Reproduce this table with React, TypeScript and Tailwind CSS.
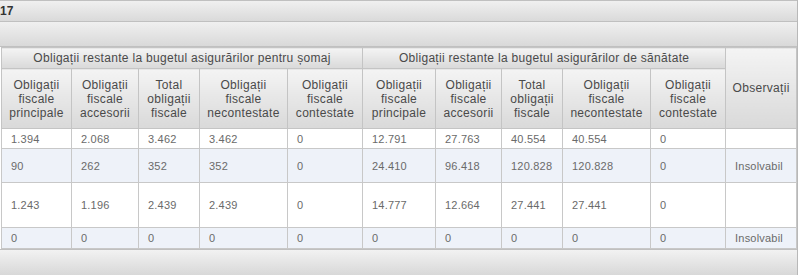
import React from "react";

const widths = [70, 67, 61, 88, 75, 73, 66, 61, 88, 75, 71];

const sub = [
  ["Obligații", "fiscale", "principale"],
  ["Obligații", "fiscale", "accesorii"],
  ["Total", "obligații", "fiscale"],
  ["Obligații", "fiscale", "necontestate"],
  ["Obligații", "fiscale", "contestate"],
];

const rows: { cells: string[]; h: string; alt: boolean }[] = [
  { cells: ["1.394", "2.068", "3.462", "3.462", "0", "12.791", "27.763", "40.554", "40.554", "0", ""], h: "h-[20px]", alt: false },
  { cells: ["90", "262", "352", "352", "0", "24.410", "96.418", "120.828", "120.828", "0", "Insolvabil"], h: "h-[34px]", alt: true },
  { cells: ["1.243", "1.196", "2.439", "2.439", "0", "14.777", "12.664", "27.441", "27.441", "0", ""], h: "h-[45px]", alt: false },
  { cells: ["0", "0", "0", "0", "0", "0", "0", "0", "0", "0", "Insolvabil"], h: "h-[21px]", alt: true },
];

const hdr = "border border-[#c4c4c4] bg-gradient-to-b from-[#f4f4f4] to-[#d9d9d9] text-[#4a4a4a] font-normal text-center align-middle p-0 tracking-[0.3px]";

export default function App() {
  return (
    <div className="w-[800px] h-[275px] bg-white overflow-hidden" style={{ fontFamily: '"Liberation Sans", Arial, sans-serif' }}>
      <div className="w-[798px] border-r border-b border-[#b8b8b8]">
        <div className="h-[22px] border-t border-b border-[#c0c0c0] bg-gradient-to-b from-[#f0f0f0] to-[#dadada] flex items-center text-[12px] font-bold text-[#333] leading-none">
          17
        </div>
        <div className="h-[25px] border-b border-[#c0c0c0] bg-gradient-to-b from-[#f0f0f0] to-[#d9d9d9]" />
        <table className="table-fixed border-collapse ml-[1px] w-[796px] text-[12px] leading-[14px]">
          <colgroup>
            {widths.map((w, i) => (
              <col key={i} style={{ width: w }} />
            ))}
          </colgroup>
          <thead>
            <tr className="h-[21px]">
              <th colSpan={5} className={hdr}>Obligații restante la bugetul asigurărilor pentru șomaj</th>
              <th colSpan={5} className={hdr}>Obligații restante la bugetul asigurărilor de sănătate</th>
              <th rowSpan={2} className={hdr}>Observații</th>
            </tr>
            <tr className="h-[60px]">
              {[...sub, ...sub].map((s, i) => (
                <th key={i} className={hdr}>
                  {s.map((l, j) => (
                    <div key={j}>{l}</div>
                  ))}
                </th>
              ))}
            </tr>
          </thead>
          <tbody>
            {rows.map((r, i) => (
              <tr key={i} className={`${r.h} ${r.alt ? "bg-[#eef2f9]" : "bg-white"}`}>
                {r.cells.map((c, j) => (
                  <td key={j} className="border border-[#c8c8c8] pl-[9px] text-[11px] text-[#6a6a6a] align-middle whitespace-nowrap tracking-[0.2px]">
                    {c}
                  </td>
                ))}
              </tr>
            ))}
          </tbody>
        </table>
        <div className="h-[26px] border-t border-[#c0c0c0] bg-gradient-to-b from-[#f2f2f2] to-[#d8d8d8]" />
      </div>
    </div>
  );
}
